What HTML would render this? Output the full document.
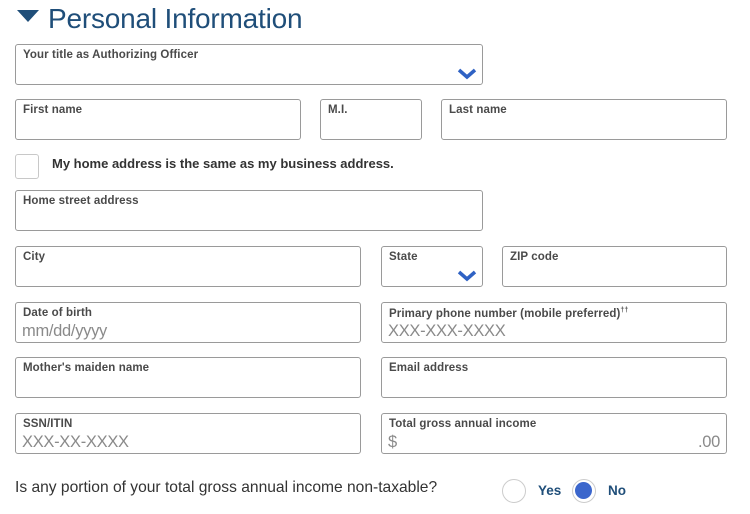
<!DOCTYPE html>
<html><head><meta charset="utf-8"><style>
*{margin:0;padding:0;box-sizing:border-box}
body{width:750px;height:514px;background:#fff;position:relative;overflow:hidden;font-family:"Liberation Sans",sans-serif}
.b{position:absolute;border:1px solid #9a9a9a;border-radius:3px;background:#fff}
.l{position:absolute;left:7px;top:4px;font-size:11.5px;font-weight:bold;color:#4a4a4a;letter-spacing:0.1px}
.p{position:absolute;left:6px;top:19px;font-size:16.5px;color:#8a8a8a;letter-spacing:-0.3px}
.ch{position:absolute;right:5px;bottom:4px}
h1{position:absolute;left:48px;top:3px;font-size:28px;font-weight:normal;color:#1f4e79;letter-spacing:-0.2px}
</style></head><body>
<svg style="position:absolute;left:17px;top:10px" width="22" height="13"><path d="M0 0H22L11 12Z" fill="#1f4e79"/></svg>
<h1>Personal Information</h1>

<div class="b" style="left:15px;top:44px;width:468px;height:41px"><div class="l">Your title as Authorizing Officer</div>
<svg class="ch" width="20" height="12"><path d="M2 2L10 9L18 2" stroke="#2f62c4" stroke-width="3.5" fill="none"/></svg></div>

<div class="b" style="left:15px;top:99px;width:286px;height:41px"><div class="l">First name</div></div>
<div class="b" style="left:320px;top:99px;width:102px;height:41px"><div class="l">M.I.</div></div>
<div class="b" style="left:441px;top:99px;width:286px;height:41px"><div class="l">Last name</div></div>

<div class="b" style="left:15px;top:154px;width:24px;height:25px;border-color:#c8c8c8"></div>
<div style="position:absolute;left:52px;top:156px;font-size:13px;font-weight:bold;color:#333">My home address is the same as my business address.</div>

<div class="b" style="left:15px;top:190px;width:468px;height:41px"><div class="l">Home street address</div></div>

<div class="b" style="left:15px;top:246px;width:346px;height:41px"><div class="l">City</div></div>
<div class="b" style="left:381px;top:246px;width:102px;height:41px"><div class="l">State</div>
<svg class="ch" width="20" height="12"><path d="M2 2L10 9L18 2" stroke="#2f62c4" stroke-width="3.5" fill="none"/></svg></div>
<div class="b" style="left:502px;top:246px;width:225px;height:41px"><div class="l">ZIP code</div></div>

<div class="b" style="left:15px;top:302px;width:346px;height:41px"><div class="l">Date of birth</div><div class="p">mm/dd/yyyy</div></div>
<div class="b" style="left:381px;top:302px;width:346px;height:41px"><div class="l">Primary phone number (mobile preferred)<sup style="font-size:7px">††</sup></div><div class="p">XXX-XXX-XXXX</div></div>

<div class="b" style="left:15px;top:357px;width:346px;height:41px"><div class="l">Mother's maiden name</div></div>
<div class="b" style="left:381px;top:357px;width:346px;height:41px"><div class="l">Email address</div></div>

<div class="b" style="left:15px;top:413px;width:346px;height:41px"><div class="l">SSN/ITIN</div><div class="p">XXX-XX-XXXX</div></div>
<div class="b" style="left:381px;top:413px;width:346px;height:41px"><div class="l">Total gross annual income</div><div class="p">$</div><div class="p" style="left:auto;right:6px">.00</div></div>

<div style="position:absolute;left:15px;top:479px;font-size:15.6px;color:#333">Is any portion of your total gross annual income non-taxable?</div>
<div style="position:absolute;left:502px;top:479px;width:24px;height:24px;border:1.5px solid #ccc;border-radius:50%"></div>
<div style="position:absolute;left:538px;top:483px;font-size:13.5px;font-weight:bold;color:#1f4e79">Yes</div>
<div style="position:absolute;left:572px;top:479px;width:24px;height:24px;border:1.5px solid #ccc;border-radius:50%;background:#fff"><div style="position:absolute;left:2px;top:2px;width:17px;height:17px;border-radius:50%;background:#3b66cc"></div></div>
<div style="position:absolute;left:608px;top:483px;font-size:13.5px;font-weight:bold;color:#1f4e79">No</div>
</body></html>
